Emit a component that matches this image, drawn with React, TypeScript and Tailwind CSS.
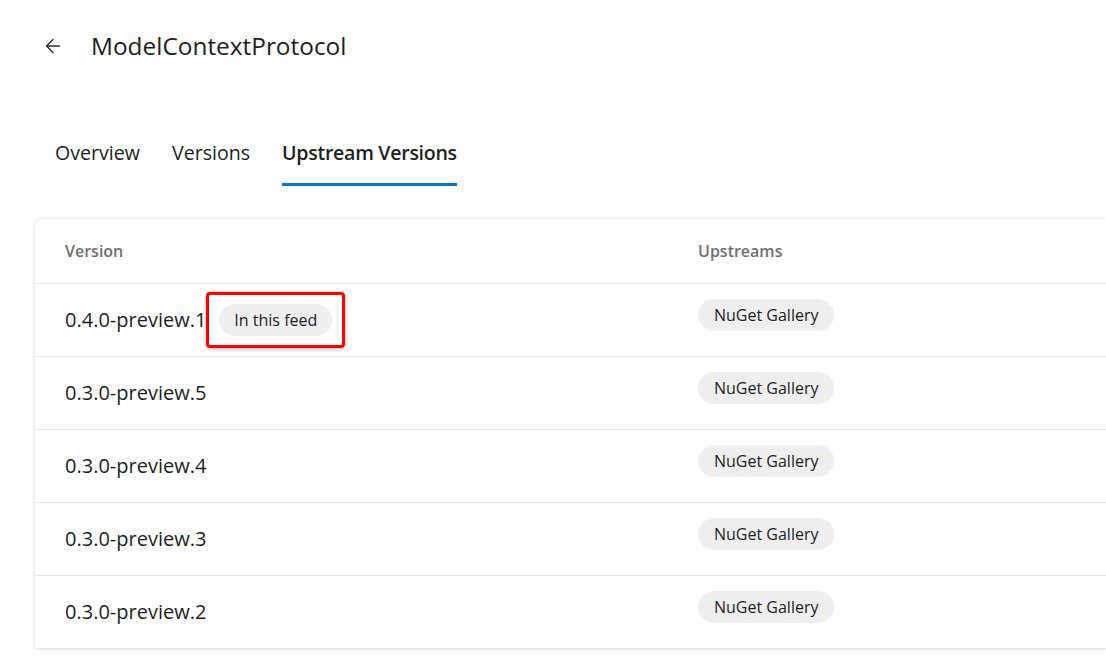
import { ArrowLeft } from "lucide-react"

const rows = [
	{ version: "0.4.0-preview.1", inFeed: true },
	{ version: "0.3.0-preview.5", inFeed: false },
	{ version: "0.3.0-preview.4", inFeed: false },
	{ version: "0.3.0-preview.3", inFeed: false },
	{ version: "0.3.0-preview.2", inFeed: false },
]

export default function App() {
	return (
		<div
			className="w-[1106px] h-[659px] overflow-hidden bg-white text-[#201f1e]"
			style={{ fontFamily: '"Segoe UI", "Open Sans", "Noto Sans", sans-serif' }}
		>
			<div className="flex items-center h-[94px] pl-[42px] pb-[2px]">
				<ArrowLeft className="w-[22px] h-[22px] text-[#323130]" strokeWidth={1.6} />
				<h1 className="ml-[27px] text-[24.4px] leading-none">ModelContextProtocol</h1>
			</div>

			<div className="flex pl-[55px] gap-[32px] mt-[37px] h-[55px] text-[19.6px]">
				<div className="pt-[7px]">Overview</div>
				<div className="pt-[7px]">Versions</div>
				<div className="pt-[7px] font-semibold tracking-[-0.3px] border-b-[3px] border-[#0078d4]">
					Upstream Versions
				</div>
			</div>

			<div className="ml-[35px] mt-[33px] rounded-tl-lg bg-white shadow-[0_0_5px_rgba(0,0,0,0.14)]">
				<div className="flex h-[65px] items-center border-b border-[#e8e8e8] text-[16px] font-semibold text-[#707070]">
					<div className="w-[663px] pl-[30px]">Version</div>
					<div>Upstreams</div>
				</div>
				{rows.map((r) => (
					<div key={r.version} className="flex h-[73px] border-b border-[#e8e8e8]">
						<div className="w-[663px] pl-[30px] flex items-center text-[20px]">
							<span>{r.version}</span>
							{r.inFeed && (
								<div className="-mt-[1px] rounded border-[3px] border-[#ff0000] px-[10px] py-[9px] shadow-[0_1px_4px_rgba(0,0,0,0.3)]">
									<span className="block rounded-full bg-[#efefef] px-[15px] py-[4px] text-[16px] leading-[24px]">
										In this feed
									</span>
								</div>
							)}
						</div>
						<div className="pt-[15px]">
							<span className="inline-block rounded-full bg-[#efefef] px-[16px] py-[4px] text-[16px] leading-[24px]">
								NuGet Gallery
							</span>
						</div>
					</div>
				))}
			</div>
		</div>
	)
}
